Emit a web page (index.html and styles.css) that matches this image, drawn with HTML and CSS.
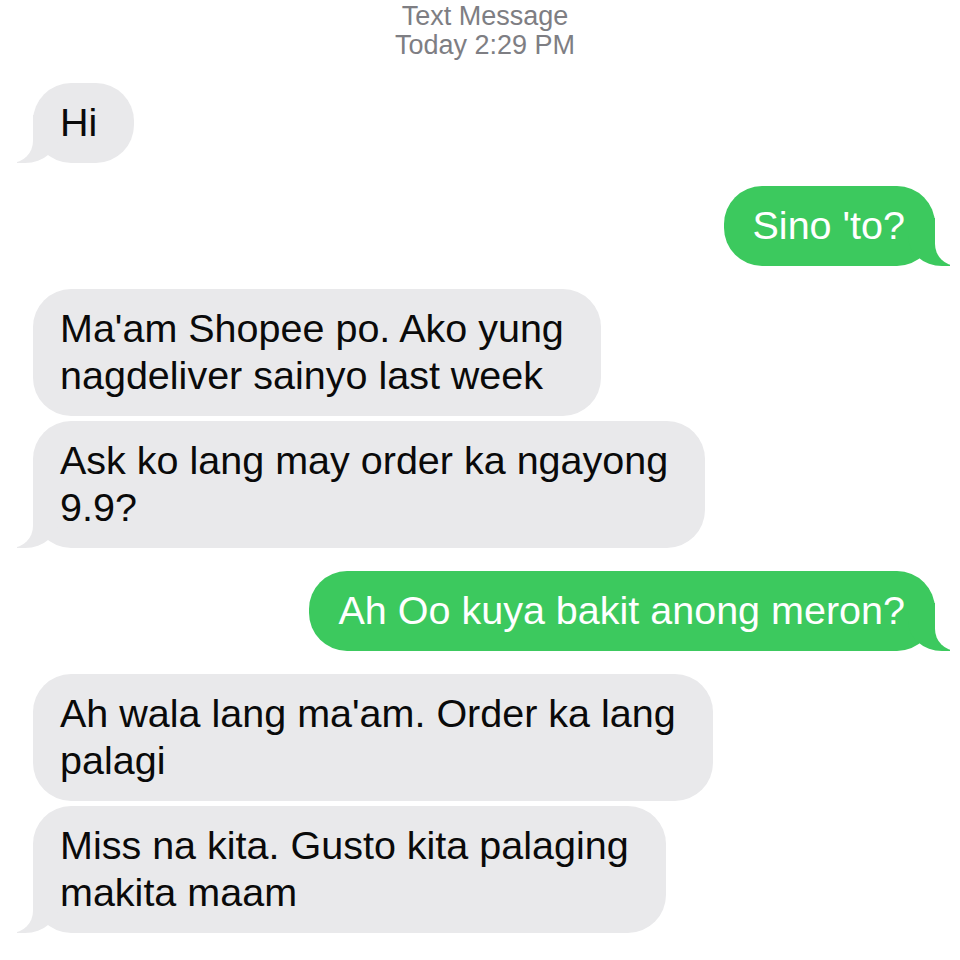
FILE: index.html
```
<!DOCTYPE html>
<html lang="en">
<head>
    <meta charset="UTF-8">
    <meta name="viewport" content="width=device-width, initial-scale=1.0">
    <title>Text Message</title>
    <link rel="stylesheet" href="styles.css">
</head>
<body>
    <div class="thread">
        <header class="thread-head">
            <div>Text Message</div>
            <div>Today 2:29 PM</div>
        </header>

        <div class="group them">
            <div class="bubble tail">Hi</div>
        </div>

        <div class="group me">
            <div class="bubble tail">Sino 'to?</div>
        </div>

        <div class="group them">
            <div class="bubble">Ma'am Shopee po. Ako yung<br>nagdeliver sainyo last week</div>
            <div class="bubble tail">Ask ko lang may order ka ngayong<br>9.9?</div>
        </div>

        <div class="group me">
            <div class="bubble tail">Ah Oo kuya bakit anong meron?</div>
        </div>

        <div class="group them">
            <div class="bubble">Ah wala lang ma'am. Order ka lang<br>palagi</div>
            <div class="bubble tail">Miss na kita. Gusto kita palaging<br>makita maam</div>
        </div>
    </div>
</body>
</html>
```

FILE: styles.css
```
body {
    margin: 0;
    background: #fff;
    font-family: "Liberation Sans", Arial, sans-serif;
}

.thread {
    display: flex;
    flex-direction: column;
    gap: 23px;
    padding: 2px 25px 0 33px;
}

.thread-head {
    text-align: center;
    color: #7e7e83;
    font-size: 27px;
    line-height: 29px;
    padding-left: 2px;
}

.group {
    display: flex;
    flex-direction: column;
    gap: 5px;
}

.group.them {
    align-items: flex-start;
}

.group.me {
    align-items: flex-end;
}

.bubble {
    position: relative;
    font-size: 39.5px;
    line-height: 47px;
    border-radius: 38px;
    white-space: nowrap;
}

.them .bubble {
    background: #e9e9eb;
    color: #0a0a0a;
    padding: 16px 37px 17px 27px;
}

.me .bubble {
    background: #3cc95e;
    color: #fff;
    padding: 16px 30px 17px 29px;
}

/* tail: coloured block with a rounded corner, masked by a white one */
.bubble.tail::before,
.bubble.tail::after {
    content: "";
    position: absolute;
    bottom: 0;
    height: 48px;
}

.them .bubble.tail::before {
    left: -16px;
    border-right: 42px solid #e9e9eb;
    border-bottom-right-radius: 34px 30px;
}

.them .bubble.tail::after {
    left: -50px;
    width: 50px;
    background: #fff;
    border-bottom-right-radius: 22px;
}

.me .bubble.tail::before {
    right: -15px;
    border-left: 42px solid #3cc95e;
    border-bottom-left-radius: 34px 30px;
}

.me .bubble.tail::after {
    right: -50px;
    width: 50px;
    background: #fff;
    border-bottom-left-radius: 22px;
}
```
